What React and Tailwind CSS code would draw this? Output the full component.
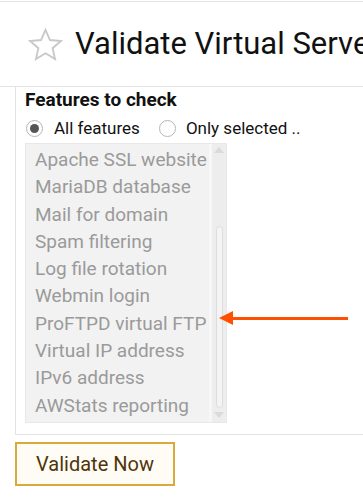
const features = [
  "Apache SSL website",
  "MariaDB database",
  "Mail for domain",
  "Spam filtering",
  "Log file rotation",
  "Webmin login",
  "ProFTPD virtual FTP",
  "Virtual IP address",
  "IPv6 address",
  "AWStats reporting",
];

function StarIcon() {
  return (
    <svg className="shrink-0" width="37" height="37" viewBox="0 0 24 24" fill="none" stroke="#c8c8c8" strokeWidth="1.2" strokeLinejoin="miter">
      <path d="M12 2.5l2.9 6.6 7.1.6-5.4 4.7 1.6 7-6.2-3.7-6.2 3.7 1.6-7L2 9.7l7.1-.6z" />
    </svg>
  );
}

function Radio({ checked }) {
  return (
    <span className="shrink-0 w-[17px] h-[17px] rounded-full border border-[#b5b5b5] bg-white flex items-center justify-center">
      {checked && <span className="w-[9px] h-[9px] rounded-full bg-[#555]" />}
    </span>
  );
}

export default function App() {
  return (
    <div className="relative w-[363px] h-[500px] bg-white overflow-hidden font-['Roboto',sans-serif]">
      <div className="mt-px border-t border-[#e3e3e3]">
        <div className="h-[84px] flex items-center pl-[27px] gap-[11px] overflow-hidden">
          <StarIcon />
          <h1 className="shrink-0 text-[31px] text-[#111] whitespace-nowrap leading-none pb-[2px]">Validate Virtual Server</h1>
        </div>
      </div>
      <div className="border-t border-[#e3e3e3] pl-[15px]">
        <div className="border-l border-b border-[#e3e3e3] pl-[9px] pt-[2px] pb-[11px]">
          <div className="text-[19px] font-bold text-[#111] leading-[22px]">Features to check</div>
          <div className="flex items-center mt-[6px] text-[17px] text-[#111] leading-[22px] pl-px">
            <Radio checked />
            <span className="ml-[11px]">All features</span>
            <span className="ml-[19px]"><Radio /></span>
            <span className="ml-[10px]">Only selected ..</span>
          </div>
          <div className="mt-[4px] w-[202px] h-[280px] bg-[#f2f2f2] border border-[#e8e8e8] flex">
            <div className="flex-1 pl-[9px] pt-[2px]">
              {features.map((f) => (
                <div key={f} className="text-[19px] text-[#9a9a9a] leading-[27.3px] whitespace-nowrap">{f}</div>
              ))}
            </div>
            <div className="w-[17px] border-l-[3px] border-[#f7f7f7] bg-[#ededed] flex flex-col items-center py-[3px]">
              <span className="w-0 h-0 border-l-[5px] border-r-[5px] border-b-[6px] border-l-transparent border-r-transparent border-b-[#dadada]" />
              <span className="mt-[73px] w-[7px] h-[182px] rounded-full border border-[#dcdcdc] bg-[#f4f4f4]" />
              <span className="mt-[4px] w-0 h-0 border-l-[5px] border-r-[5px] border-t-[6px] border-l-transparent border-r-transparent border-t-[#dadada]" />
            </div>
          </div>
        </div>
      </div>
      <div className="pl-[15px] pt-[7px]">
        <button className="w-[160px] h-[44px] border-2 border-[#d9a93c] bg-[#fffcf6] text-[#4f3509] text-[20px] leading-none">
          Validate Now
        </button>
      </div>
      <div className="absolute left-[219px] top-[311px] flex items-center">
        <span className="w-0 h-0 border-t-[7px] border-b-[7px] border-r-[14px] border-t-transparent border-b-transparent border-r-[#ff4f00]" />
        <span className="w-[116px] h-[3px] bg-[#ff4f00] -ml-px" />
      </div>
    </div>
  );
}
